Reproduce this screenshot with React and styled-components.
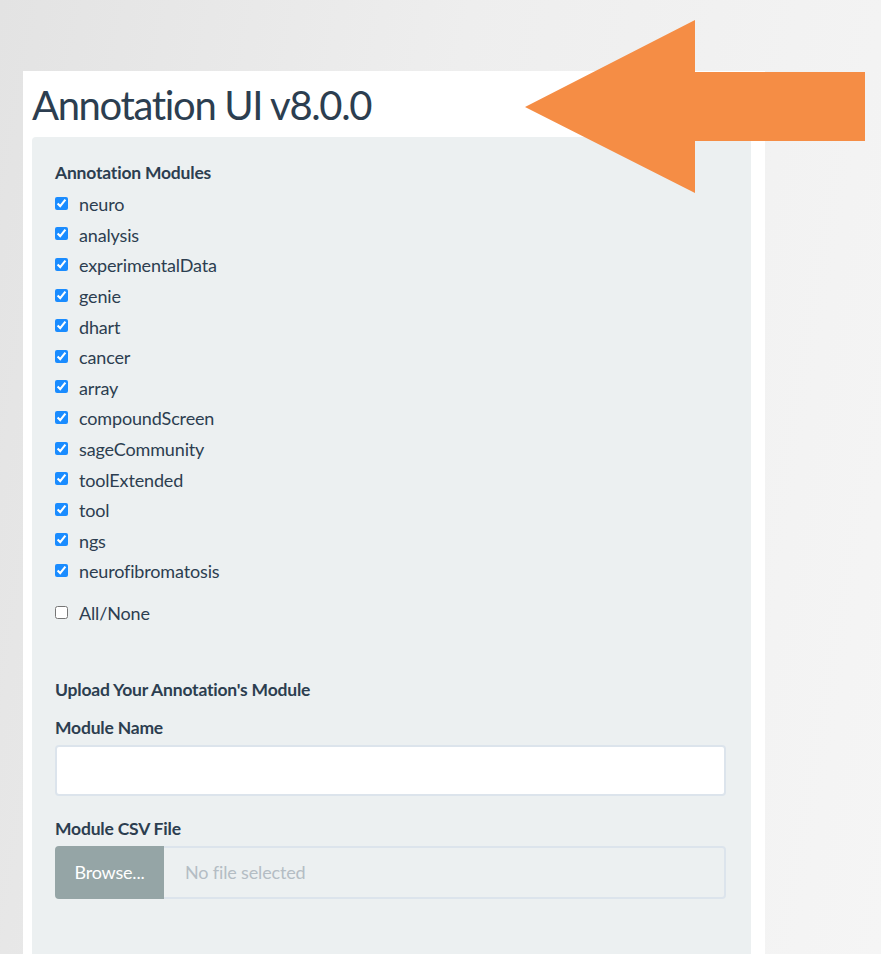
import React from "react";
import styled, { createGlobalStyle } from "styled-components";

const GlobalStyle = createGlobalStyle`
  html, body { margin: 0; padding: 0; }
  body {
    background: linear-gradient(100deg, #e3e3e3 0%, #eeeeee 45%, #f5f5f5 100%);
    font-family: Lato, "Open Sans", sans-serif;
    color: #2c3e50;
  }
`;

const Page = styled.div`
  position: relative;
  box-sizing: border-box;
  width: 881px;
  height: 954px;
  overflow: hidden;
  padding: 71px 0 0 23px;
`;

const Panel = styled.div`
  box-sizing: border-box;
  width: 742px;
  height: 883px;
  background: #ffffff;
  padding: 0 14px 0 9px;
`;

const Title = styled.h1`
  margin: 0;
  height: 66px;
  font-family: Lato, sans-serif;
  font-weight: 400;
  font-size: 40px;
  line-height: 68px;
  color: #2c3e50;
  letter-spacing: -1.35px;
`;

const Well = styled.div`
  box-sizing: border-box;
  width: 719px;
  height: 817px;
  background: #ecf0f1;
  border-radius: 4px 4px 0 0;
  padding: 26px 25px 0 23px;
`;

const GroupLabel = styled.div`
  font-weight: 700;
  font-size: 17.5px;
  letter-spacing: -0.2px;
  line-height: 20px;
  margin-bottom: ${(p) => p.$gap || 0}px;
`;

const CheckList = styled.div`
  display: flex;
  flex-direction: column;
`;

const CheckRow = styled.label`
  display: flex;
  align-items: center;
  gap: 11px;
  height: 30.6px;
  font-size: 18px;
  letter-spacing: -0.15px;
  color: #2c3e50;
  margin-top: ${(p) => p.$top || 0}px;
`;

const Box = styled.input`
  margin: 0;
  width: 13px;
  height: 13px;
  accent-color: #1a8cff;
  position: relative;
  top: -1px;
`;

const Section = styled.div`
  margin-top: ${(p) => p.$top}px;
`;

const TextInput = styled.div`
  box-sizing: border-box;
  width: 671px;
  height: 51px;
  background: #fff;
  border: 2px solid #dce4ec;
  border-radius: 4px;
`;

const FileGroup = styled.div`
  display: flex;
  width: 671px;
  height: 53px;
`;

const BrowseBtn = styled.div`
  box-sizing: border-box;
  width: 109px;
  display: flex;
  align-items: center;
  justify-content: center;
  background: #95a5a6;
  color: #fff;
  font-size: 18px;
  letter-spacing: -0.2px;
  border-radius: 4px 0 0 4px;
  padding-bottom: 2px;
`;

const FileName = styled.div`
  box-sizing: border-box;
  flex: 1;
  display: flex;
  align-items: center;
  padding: 0 0 2px 21px;
  border: 2px solid #dce4ec;
  border-left: none;
  border-radius: 0 4px 4px 0;
  color: #b4bdc4;
  font-size: 18px;
  letter-spacing: -0.15px;
`;

const Arrow = styled.svg`
  position: absolute;
  left: 525px;
  top: 20px;
`;

const modules = [
  "neuro",
  "analysis",
  "experimentalData",
  "genie",
  "dhart",
  "cancer",
  "array",
  "compoundScreen",
  "sageCommunity",
  "toolExtended",
  "tool",
  "ngs",
  "neurofibromatosis",
];

export default function App() {
  return (
    <>
      <GlobalStyle />
      <Page>
        <Panel>
          <Title>Annotation UI v8.0.0</Title>
          <Well>
            <GroupLabel $gap={6}>Annotation Modules</GroupLabel>
            <CheckList>
              {modules.map((m) => (
                <CheckRow key={m}>
                  <Box type="checkbox" defaultChecked />
                  {m}
                </CheckRow>
              ))}
              <CheckRow $top={11}>
                <Box type="checkbox" />
                All/None
              </CheckRow>
            </CheckList>
            <Section $top={52}>
              <GroupLabel>Upload Your Annotation's Module</GroupLabel>
            </Section>
            <Section $top={18}>
              <GroupLabel $gap={7}>Module Name</GroupLabel>
              <TextInput />
            </Section>
            <Section $top={23}>
              <GroupLabel $gap={7}>Module CSV File</GroupLabel>
              <FileGroup>
                <BrowseBtn>Browse...</BrowseBtn>
                <FileName>No file selected</FileName>
              </FileGroup>
            </Section>
          </Well>
        </Panel>
        <Arrow width="341" height="174" viewBox="0 0 341 174">
          <polygon
            points="0,87 170,0 170,52 340,52 340,121 170,121 170,173"
            fill="#f58d45"
          />
        </Arrow>
      </Page>
    </>
  );
}
